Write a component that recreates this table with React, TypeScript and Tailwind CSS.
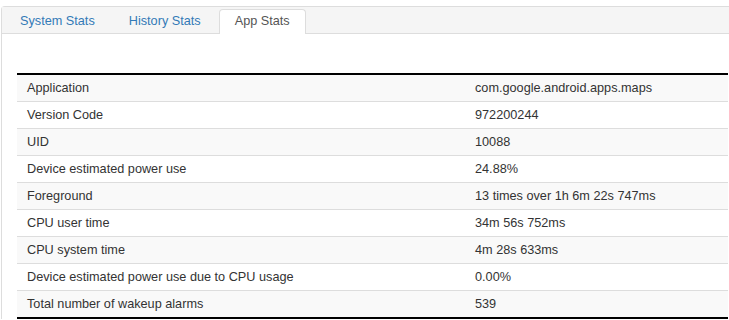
import React from 'react';

const rows: [string, string][] = [
  ['Application', 'com.google.android.apps.maps'],
  ['Version Code', '972200244'],
  ['UID', '10088'],
  ['Device estimated power use', '24.88%'],
  ['Foreground', '13 times over 1h 6m 22s 747ms'],
  ['CPU user time', '34m 56s 752ms'],
  ['CPU system time', '4m 28s 633ms'],
  ['Device estimated power use due to CPU usage', '0.00%'],
  ['Total number of wakeup alarms', '539'],
];

const tabs = ['System Stats', 'History Stats', 'App Stats'];

export default function App() {
  const active = 'App Stats';
  return (
    <div className="min-h-[320px] bg-white pt-[6px] pl-[1px] font-['Liberation_Sans',Arial,sans-serif] text-[12.7px] text-[#333] overflow-hidden">
      <div className="w-[760px] rounded-tl-[4px] border-l border-t border-[#ddd]">
        <div className="flex h-[27px] items-end border-b border-[#ddd] bg-[#f5f5f5] pl-[2px]">
          {tabs.map((t) => (
            <div
              key={t}
              className={
                t === active
                  ? '-mb-px mr-[2px] flex h-[25px] items-center rounded-t-[4px] border border-b-0 border-[#ddd] bg-white px-[15px] text-[#555]'
                  : '-mb-px mr-[2px] flex h-[25px] items-center border border-transparent px-[15px] text-[#337ab7]'
              }
            >
              {t}
            </div>
          ))}
        </div>
        <div className="pl-[15px] pt-[39px]">
          <div className="w-[711px] border-y-2 border-black">
            {rows.map(([k, v], i) => (
              <div
                key={k}
                className={
                  'flex items-center leading-[18px] ' +
                  (i % 2 === 0 ? 'bg-[#f9f9f9] ' : 'bg-white ') +
                  (i > 0 ? 'h-[27px] border-t border-[#ddd]' : 'h-[26px]')
                }
              >
                <div className="w-[450px] pl-[10px]">{k}</div>
                <div className="pl-[8px]">{v}</div>
              </div>
            ))}
          </div>
        </div>
      </div>
    </div>
  );
}
